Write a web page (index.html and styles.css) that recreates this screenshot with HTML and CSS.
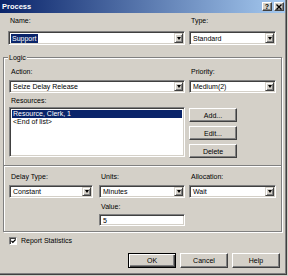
FILE: index.html
```html
<!DOCTYPE html>
<html>
<head>
    <title>Process</title>
    <link rel="stylesheet" href="styles.css">
</head>
<body>
    <div class="window">
        <div class="titlebar">
            <span class="title">Process</span>
            <span class="caption-btns">
                <span class="cbtn help">?</span>
                <span class="cbtn">
                    <svg width="6" height="6" viewBox="0 0 6 6"><path d="M0.5 0.5L5.5 5.5M5.5 0.5L0.5 5.5" stroke="#000" stroke-width="1.4"/></svg>
                </span>
            </span>
        </div>

        <div class="content">
            <div class="cols top">
                <div class="col wide">
                    <div class="lbl">Name:</div>
                    <div class="field combo"><span class="val"><span class="sel">Support</span></span><span class="arrow"></span></div>
                </div>
                <div class="col right">
                    <div class="lbl">Type:</div>
                    <div class="field combo"><span class="val">Standard</span><span class="arrow"></span></div>
                </div>
            </div>

            <div class="group">
                <span class="legend">Logic</span>

                <div class="cols">
                    <div class="col wide">
                        <div class="lbl">Action:</div>
                        <div class="field combo"><span class="val">Seize Delay Release</span><span class="arrow"></span></div>
                    </div>
                    <div class="col right">
                        <div class="lbl">Priority:</div>
                        <div class="field combo"><span class="val">Medium(2)</span><span class="arrow"></span></div>
                    </div>
                </div>

                <div class="lbl res-lbl">Resources:</div>
                <div class="cols list-row">
                    <div class="field list">
                        <div class="item selected">Resource, Clerk, 1</div>
                        <div class="item">&lt;End of list&gt;</div>
                    </div>
                    <div class="btn-stack">
                        <div class="btn">Add...</div>
                        <div class="btn">Edit...</div>
                        <div class="btn">Delete</div>
                    </div>
                </div>

                <div class="separator"></div>

                <div class="cols delay">
                    <div class="col c1">
                        <div class="lbl">Delay Type:</div>
                        <div class="field combo"><span class="val">Constant</span><span class="arrow"></span></div>
                    </div>
                    <div class="col c2">
                        <div class="lbl">Units:</div>
                        <div class="field combo"><span class="val">Minutes</span><span class="arrow"></span></div>
                        <div class="lbl value-lbl">Value:</div>
                        <div class="field text"><span class="val">5</span></div>
                    </div>
                    <div class="col right">
                        <div class="lbl">Allocation:</div>
                        <div class="field combo"><span class="val">Wait</span><span class="arrow"></span></div>
                    </div>
                </div>
            </div>

            <div class="check-row">
                <span class="checkbox">
                    <svg width="6" height="6" viewBox="0 0 6 6"><path d="M0.5 2.8L2.2 4.6L5.6 1" stroke="#000" stroke-width="1.5" fill="none"/></svg>
                </span>
                <span class="check-lbl">Report Statistics</span>
            </div>

            <div class="footer">
                <div class="btn default">OK</div>
                <div class="btn">Cancel</div>
                <div class="btn">Help</div>
            </div>
        </div>
    </div>
</body>
</html>
```

FILE: styles.css
```css
* {
    box-sizing: border-box;
}
html, body {
    margin: 0;
    padding: 0;
    background: #d4d0c8;
    font-family: "Liberation Sans", Arial, sans-serif;
    font-size: 7px;
    color: #000;
}
.window {
    width: 287px;
    height: 275px;
    background: #d4d0c8;
    border-right: 1px solid #404040;
    border-bottom: 1px solid #404040;
    box-shadow: inset -1px -1px 0 #808080;
}
.titlebar {
    height: 13px;
    width: 285px;
    display: flex;
    align-items: center;
    padding-left: 2px;
    background: linear-gradient(to right, #0a246a, #a6caf0);
}
.title {
    color: #fff;
    font-weight: bold;
    font-size: 7.5px;
}
.caption-btns {
    margin-left: auto;
    display: flex;
    gap: 2px;
    margin-right: 1px;
}
.cbtn {
    width: 10px;
    height: 9px;
    background: #d4d0c8;
    border: 1px solid;
    border-color: #fff #404040 #404040 #fff;
    box-shadow: inset -1px -1px 0 #808080;
    display: flex;
    align-items: center;
    justify-content: center;
    font-weight: bold;
    font-size: 7px;
    line-height: 7px;
}
.content {
    padding-top: 3px;
}
.cols {
    display: flex;
}
.col {
    display: flex;
    flex-direction: column;
}
.top {
    padding-left: 8px;
}
.top .wide {
    width: 177px;
}
.top .right {
    margin-left: 4px;
    width: 87px;
}
.lbl {
    height: 9px;
    line-height: 9px;
    padding-left: 2px;
    white-space: nowrap;
}
.top .lbl {
    margin-bottom: 6px;
}
.field {
    background: #fff;
    border: 1px solid;
    border-color: #808080 #fff #fff #808080;
    box-shadow: inset 1px 1px 0 #404040, inset -1px -1px 0 #d4d0c8;
}
.combo {
    height: 13px;
    display: flex;
    align-items: stretch;
    padding: 1px;
}
.top .combo {
    height: 14px;
}
.val {
    flex: 1;
    display: flex;
    align-items: center;
    padding-left: 2px;
    white-space: nowrap;
    overflow: hidden;
}
.sel {
    background: #0a246a;
    color: #fff;
    padding: 1px 1px;
    margin-left: -1px;
}
.arrow {
    width: 9px;
    background: #d4d0c8;
    border: 1px solid;
    border-color: #d4d0c8 #404040 #404040 #d4d0c8;
    box-shadow: inset 1px 1px 0 #fff, inset -1px -1px 0 #808080;
    display: flex;
    align-items: center;
    justify-content: center;
}
.arrow:after {
    content: '';
    border-left: 2.5px solid transparent;
    border-right: 2.5px solid transparent;
    border-top: 3px solid #000;
}
.group {
    position: relative;
    margin-top: 12px;
    margin-left: 3px;
    width: 279px;
    border: 1px solid #808080;
    box-shadow: inset 1px 1px 0 #fff, 1px 1px 0 #fff;
    padding: 9px 0 5px 5px;
}
.legend {
    position: absolute;
    top: -5px;
    left: 4px;
    background: #d4d0c8;
    padding: 0 1px;
    line-height: 9px;
}
.group .wide {
    width: 176px;
}
.group .right {
    margin-left: 4px;
    width: 87px;
}
.group .lbl + .field {
    margin-top: 4px;
}
.res-lbl {
    margin-top: 3px;
}
.list-row {
    margin-top: 2px;
}
.list {
    width: 176px;
    height: 50px;
    padding: 2px;
}
.item {
    height: 8px;
    line-height: 8px;
    padding-left: 1px;
    white-space: nowrap;
}
.item.selected {
    background: #0a246a;
    color: #fff;
}
.btn-stack {
    margin-left: 4px;
    margin-top: 1px;
    display: flex;
    flex-direction: column;
    gap: 4px;
}
.btn {
    width: 48px;
    height: 14px;
    background: #d4d0c8;
    border: 1px solid;
    border-color: #fff #404040 #404040 #fff;
    box-shadow: inset -1px -1px 0 #808080;
    display: flex;
    align-items: center;
    justify-content: center;
}
.separator {
    margin: 7px 0 0 -5px;
    width: 277px;
    height: 2px;
    border-top: 1px solid #808080;
    border-bottom: 1px solid #fff;
}
.delay {
    margin-top: 5px;
}
.delay .c1 {
    width: 84px;
}
.delay .c2 {
    margin-left: 6px;
    width: 86px;
}
.delay .right {
    margin-left: 4px;
}
.value-lbl {
    margin-top: 4px;
}
.text {
    height: 12px;
    display: flex;
    padding: 1px;
}
.group .value-lbl + .field {
    margin-top: 3px;
}
.check-row {
    margin-top: 4px;
    padding-left: 9px;
    height: 9px;
    display: flex;
    align-items: center;
}
.checkbox {
    width: 8px;
    height: 8px;
    background: #fff;
    border: 1px solid;
    border-color: #808080 #fff #fff #808080;
    box-shadow: inset 1px 1px 0 #404040;
    display: flex;
    align-items: center;
    justify-content: center;
    padding: 1px 0 0 1px;
}
.check-lbl {
    margin-left: 4px;
}
.footer {
    margin-top: 8px;
    padding-left: 128px;
    display: flex;
    gap: 4px;
}
.footer .btn {
    height: 15px;
}
.btn.default {
    border: 1px solid #000;
    box-shadow: inset 1px 1px 0 #fff, inset -1px -1px 0 #404040, inset -2px -2px 0 #808080;
}
```
